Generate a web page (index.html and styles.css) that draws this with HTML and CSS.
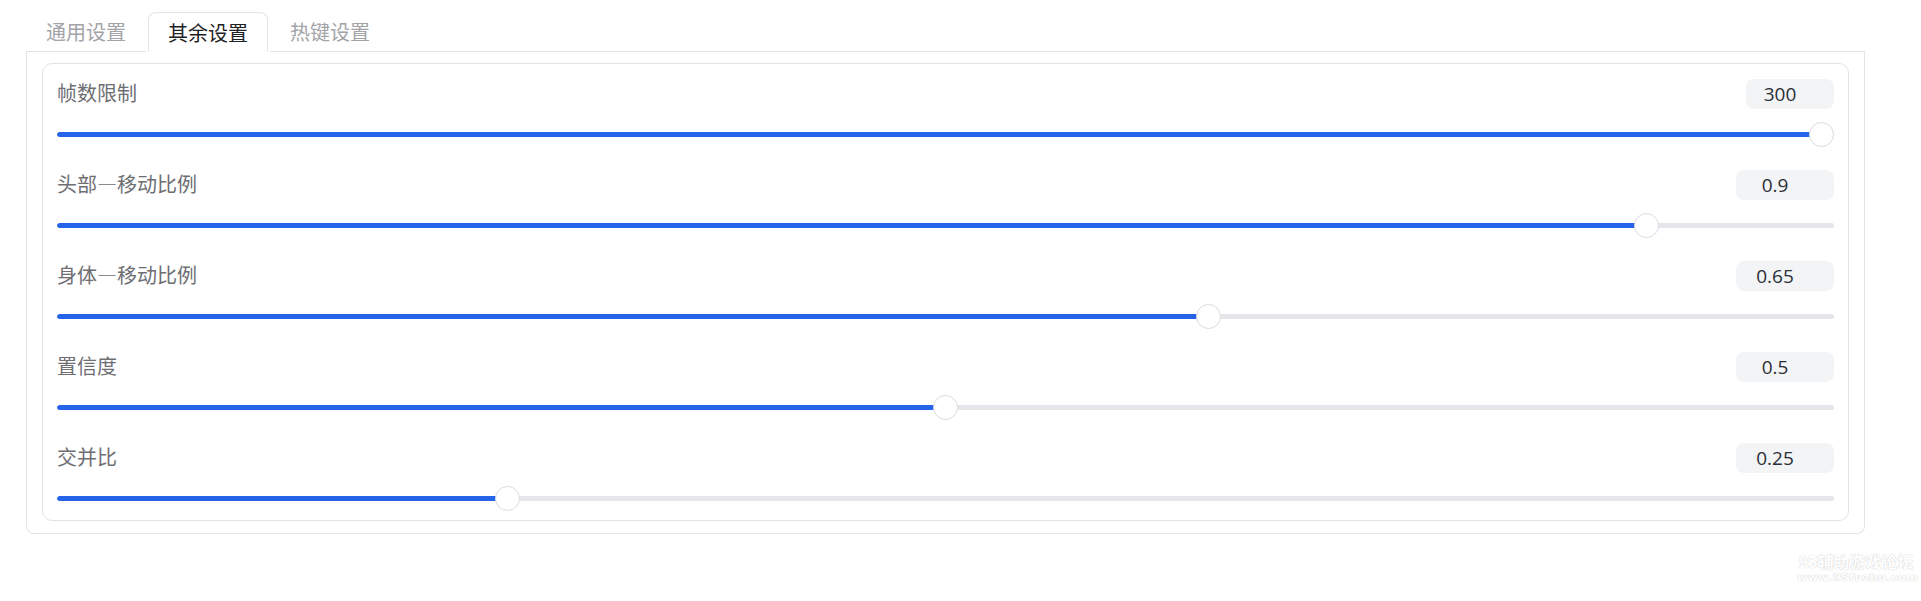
FILE: index.html
```html
<!DOCTYPE html>
<html lang="zh-CN">
<head>
<meta charset="utf-8">
<title>其余设置</title>
<link rel="stylesheet" href="styles.css">
</head>
<body>
<div class="page">
  <div class="tabs">
    <div class="tab">通用设置</div>
    <div class="tab active">其余设置</div>
    <div class="tab">热键设置</div>
    <div class="tab-fill"></div>
  </div>
  <div class="pane">
    <div class="card">
      <div class="row">
        <div class="head"><span class="label">帧数限制</span><span class="value narrow">300</span></div>
        <div class="slider" style="--p:1"><div class="track"><div class="fill"></div></div><div class="thumb"></div></div>
      </div>
      <div class="row">
        <div class="head"><span class="label">头部—移动比例</span><span class="value">0.9</span></div>
        <div class="slider" style="--p:0.9"><div class="track"><div class="fill"></div></div><div class="thumb"></div></div>
      </div>
      <div class="row">
        <div class="head"><span class="label">身体—移动比例</span><span class="value">0.65</span></div>
        <div class="slider" style="--p:0.65"><div class="track"><div class="fill"></div></div><div class="thumb"></div></div>
      </div>
      <div class="row">
        <div class="head"><span class="label">置信度</span><span class="value">0.5</span></div>
        <div class="slider" style="--p:0.5"><div class="track"><div class="fill"></div></div><div class="thumb"></div></div>
      </div>
      <div class="row">
        <div class="head"><span class="label">交并比</span><span class="value">0.25</span></div>
        <div class="slider" style="--p:0.25"><div class="track"><div class="fill"></div></div><div class="thumb"></div></div>
      </div>
    </div>
  </div>
</div>
<div class="watermark">
  <div class="wm1">95辅助游戏论坛</div>
  <div class="wm2">www.95fuzhu.com</div>
</div>
</body>
</html>
```
FILE: styles.css
```css
html, body {
  margin: 0;
  padding: 0;
  background: #ffffff;
}
body {
  font-family: "Noto Sans", "Noto Sans CJK SC", sans-serif;
  width: 1921px;
  height: 601px;
  position: relative;
  overflow: hidden;
}
.page {
  padding: 12px 56px 0 26px;
}
.tabs {
  display: flex;
  align-items: stretch;
  height: 40px;
  gap: 2px;
}
.tab {
  width: 120px;
  box-sizing: border-box;
  display: flex;
  align-items: center;
  justify-content: center;
  font-family: "Noto Sans CJK SC", sans-serif;
  font-size: 20px;
  color: #a3a3a8;
  border-bottom: 1px solid #e4e4e7;
}
.tab.active {
  color: #1f2225;
  border: 1px solid #e4e4e7;
  border-bottom: 1px solid #ffffff;
  border-radius: 8px 8px 0 0;
  background: #ffffff;
}
.tab-fill {
  flex: 1;
  border-bottom: 1px solid #e4e4e7;
  margin-left: -2px;
}
.pane {
  border: 1px solid #e4e4e7;
  border-top: none;
  border-radius: 0 0 8px 8px;
  padding: 11px 15px 12px 15px;
}
.card {
  border: 1px solid #e4e4e7;
  border-radius: 10px;
  padding: 15px 14px 9px 14px;
  display: flex;
  flex-direction: column;
}
.row {
  display: flex;
  flex-direction: column;
}
.row + .row {
  margin-top: 23px;
}
.head {
  display: flex;
  justify-content: space-between;
  align-items: center;
  height: 30px;
}
.label {
  font-family: "Noto Sans CJK SC", sans-serif;
  font-size: 20px;
  color: #6e6e73;
  line-height: 30px;
  margin-top: -2px;
}
.value {
  box-sizing: border-box;
  width: 98px;
  height: 30px;
  background: #f3f4f6;
  border-radius: 8px;
  font-family: "Open Sans", sans-serif;
  font-size: 19px;
  color: #2b2f36;
  text-align: center;
  padding-right: 20px;
  line-height: 30px;
}
.value.narrow {
  width: 88px;
}
.slider {
  position: relative;
  height: 25px;
  margin-top: 13px;
  display: flex;
  align-items: center;
}
.track {
  width: 100%;
  height: 5px;
  border-radius: 3px;
  background: #e5e5ea;
  overflow: hidden;
}
.fill {
  height: 100%;
  width: calc(12.5px + (100% - 25px) * var(--p));
  background: #2563eb;
  border-radius: 3px 0 0 3px;
}
.thumb {
  position: absolute;
  top: 0;
  left: calc((100% - 25px) * var(--p));
  width: 25px;
  height: 25px;
  box-sizing: border-box;
  border-radius: 50%;
  background: #ffffff;
  border: 1px solid #dcdcdf;
}
.watermark {
  position: absolute;
  left: 1797px;
  top: 551px;
  width: 118px;
  text-align: center;
  color: #ffffff;
  font-weight: bold;
  text-shadow: 0 0 1px #cfcfcf, 0 0 1px #cfcfcf;
  font-family: "Noto Sans CJK SC", sans-serif;
}
.wm1 {
  font-size: 16px;
  line-height: 20px;
}
.wm2 {
  font-family: "DejaVu Sans", sans-serif;
  font-size: 11px;
  line-height: 14px;
  letter-spacing: 0.5px;
}
```
